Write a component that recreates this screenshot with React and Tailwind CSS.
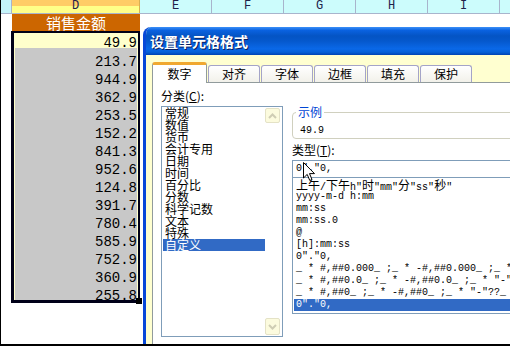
import React from "react";

const nums = ["213.7","944.9","362.9","253.5","152.2","841.3","952.6","124.8","391.7","780.4","585.9","752.9","360.9","255.8"];
const cats = ["常规","数值","货币","会计专用","日期","时间","百分比","分数","科学记数","文本","特殊","自定义"];
const types = [
  "yyyy-m-d h:mm",
  "mm:ss",
  "mm:ss.0",
  "@",
  "[h]:mm:ss",
  '0"."0,',
  '_ * #,##0.000_ ;_ * -#,##0.000_ ;_ * "-"???_ ;_ @_ ',
  '_ * #,##0.0_ ;_ * -#,##0.0_ ;_ * "-"?_ ;_ @_ ',
  '_ * #,##0_ ;_ * -#,##0_ ;_ * "-"??_ ;_ @_ ',
  '0"."0,',
];

function Cj({ children }) {
  return <span className="text-[12px] font-['Noto_Sans_CJK_SC',sans-serif]">{children}</span>;
}

function Tab({ label }) {
  return (
    <div className="w-[52px] h-[17px] shrink-0 flex items-center justify-center border border-b-0 border-[#A4A4C8] rounded-t-[3px] bg-[linear-gradient(#FFFFFF,#F2F1EA)] text-[12px] leading-[12px] text-black">
      {label}
    </div>
  );
}

function Chevron({ down }) {
  return (
    <svg width="9" height="6" viewBox="0 0 9 6">
      <path d={down ? "M1 1 L4.5 4.5 L8 1" : "M1 5 L4.5 1.5 L8 5"} fill="none" stroke="#CFCDB4" strokeWidth="2" />
    </svg>
  );
}

export default function App() {
  return (
    <div className="w-[510px] h-[346px] relative overflow-hidden bg-white border-l border-b-2 border-black font-['Noto_Sans_CJK_SC',sans-serif]">
      {/* column headers */}
      <div className="flex h-[14px] border-b border-[#A8B4CC] font-['Liberation_Mono',monospace] text-[12px] leading-[13px] text-[#20204A]">
        <div className="w-[11px] shrink-0 bg-[#C4F4FA] border-r border-[#A8B4CC]" />
        <div className="w-[128px] shrink-0 bg-[linear-gradient(#FFCC66_50%,#FFFF88_50%)] border-r border-[#D8B050] text-center">D</div>
        {["E", "F", "G", "H", "I"].map((c) => (
          <div key={c} className="w-[72px] shrink-0 bg-[#CCFCFC] border-r border-[#A8B4CC] text-center">{c}</div>
        ))}
        <div className="flex-1 bg-[#CCFCFC]" />
      </div>
      {/* header cell row */}
      <div className="flex h-[17px]">
        <div className="w-[11px] shrink-0" />
        <div className="w-[128px] shrink-0 bg-[#CC6600] text-white text-[15px] leading-[17px] text-center">销售金额</div>
      </div>
      {/* data block */}
      <div className="ml-[10px] w-[129px] h-[272px] flex flex-col border-t-2 border-l-[3px] border-r-2 border-b-[3px] border-[#000018] font-['Liberation_Mono',monospace] text-[14px] text-black">
        <div className="h-[15px] bg-[#FFFFCC] text-right pr-[1px] pt-[4px] leading-[13px]">49.9</div>
        <div className="flex-1 bg-[#C8C8C8] border-x border-[#FFFFC8] overflow-hidden">
          {nums.map((n, i) => (
            <div key={i} className="h-[18px] text-right pt-[8px] leading-[13px]">{n}</div>
          ))}
        </div>
      </div>
      {/* fill handle */}
      <div className="absolute left-[135px] top-[298px] w-[6px] h-[6px] bg-black" />

      {/* dialog */}
      <div className="absolute left-[142px] top-[27px] w-[390px] h-[330px] flex flex-col border-l-[3px] border-[#0848D8] rounded-tl-[8px] bg-[#FFFFD0] overflow-hidden">
        <div className="h-[28px] shrink-0 pl-[4px] flex items-center bg-[linear-gradient(#3C90F8_0%,#0A62E0_12%,#0454C4_32%,#0558CC_50%,#0A68E8_78%,#0560D6_90%,#0042B2_100%)]">
          <span className="text-white font-bold text-[14px] leading-[16px] [text-shadow:1px_1px_0_#0A1E60]">设置单元格格式</span>
        </div>
        <div className="flex-1 flex flex-col pl-[6px] pt-[7px] min-h-0">
          {/* tabs */}
          <div className="flex items-end h-[20px] gap-[1px] shrink-0">
            <div className="relative z-10 -mb-px w-[55px] h-[21px] shrink-0 flex items-center justify-center bg-white border-x border-[#919B9C] border-t-[3px] border-t-[#F0A830] rounded-t-[3px] text-[12px] leading-[12px] text-black">
              数字
            </div>
            {["对齐", "字体", "边框", "填充", "保护"].map((t) => (
              <Tab key={t} label={t} />
            ))}
          </div>
          {/* tab page */}
          <div className="flex-1 flex bg-white border-t border-l border-[#919B9C] min-w-0">
            {/* left column */}
            <div className="ml-[8px] w-[122px] shrink-0 pt-[7px] flex flex-col">
              <div className="text-[12px] leading-[12px] text-black whitespace-nowrap">
                分类(<span className="underline">C</span>):
              </div>
              <div className="mt-[4px] h-[231px] flex border border-[#7F9DB9] bg-white">
                <div className="flex-1 min-w-0 pl-[1px] text-[12px] leading-[12px] text-black whitespace-nowrap">
                  {cats.map((c, i) => (
                    <div key={c} className={"h-[12px] pl-[2px] " + (i === 11 ? "bg-[#316AC5] text-white" : "")}>{c}</div>
                  ))}
                </div>
                <div className="w-[17px] shrink-0 flex flex-col justify-between pt-[1px] pb-[1px]">
                  <div className="w-[15px] h-[15px] flex items-center justify-center bg-[#FCFBDE] border border-[#E4E2C6] rounded-[2px]">
                    <Chevron />
                  </div>
                  <div className="w-[15px] h-[17px] flex items-center justify-center bg-[#FCFBDE] border border-[#E4E2C6] rounded-[2px]">
                    <Chevron down />
                  </div>
                </div>
              </div>
            </div>
            {/* right column */}
            <div className="ml-[9px] flex-1 min-w-0 pt-[23px] flex flex-col">
              <fieldset className="border border-[#D0D0BF] rounded-[4px] px-[3px] pb-[1px]">
                <legend className="px-[2px] text-[12px] leading-[12px] text-[#0046D5]">示例</legend>
                <div className="mt-[7px] ml-[4px] h-[12px] font-['Liberation_Mono',monospace] text-[10px] leading-[12px] text-black">49.9</div>
              </fieldset>
              <div className="mt-[5px] text-[12px] leading-[12px] text-black whitespace-nowrap">
                类型(<span className="underline">T</span>):
              </div>
              <div className="mt-[4px] h-[18px] border border-[#7F9DB9] pl-[3px] flex items-center font-['Liberation_Mono',monospace] text-[10px] leading-[12px] text-black">
                0"."0,
              </div>
              <div className="-mt-px h-[137px] border border-[#7F9DB9] pt-[1px] pl-[1px] font-['Liberation_Mono',monospace] text-[10px] leading-[12px] text-black whitespace-pre overflow-hidden">
                <div className="h-[12px] pl-[2px]">
                  <Cj>上午</Cj>/<Cj>下午</Cj>h"<Cj>时</Cj>"mm"<Cj>分</Cj>"ss"<Cj>秒</Cj>"
                </div>
                {types.map((t, i) => (
                  <div key={i} className={"h-[12px] pl-[2px] " + (i === 9 ? "bg-[#316AC5] text-white" : "")}>{t}</div>
                ))}
              </div>
            </div>
          </div>
        </div>
      </div>

      {/* mouse cursor */}
      <svg className="absolute left-[302px] top-[162px]" width="13" height="20" viewBox="0 0 13 20">
        <path d="M0.5 0.5 L0.5 16 L4.2 12.4 L6.8 18.5 L9 17.5 L6.5 11.6 L11.5 11.6 Z" fill="white" stroke="black" strokeWidth="1" />
      </svg>
    </div>
  );
}
